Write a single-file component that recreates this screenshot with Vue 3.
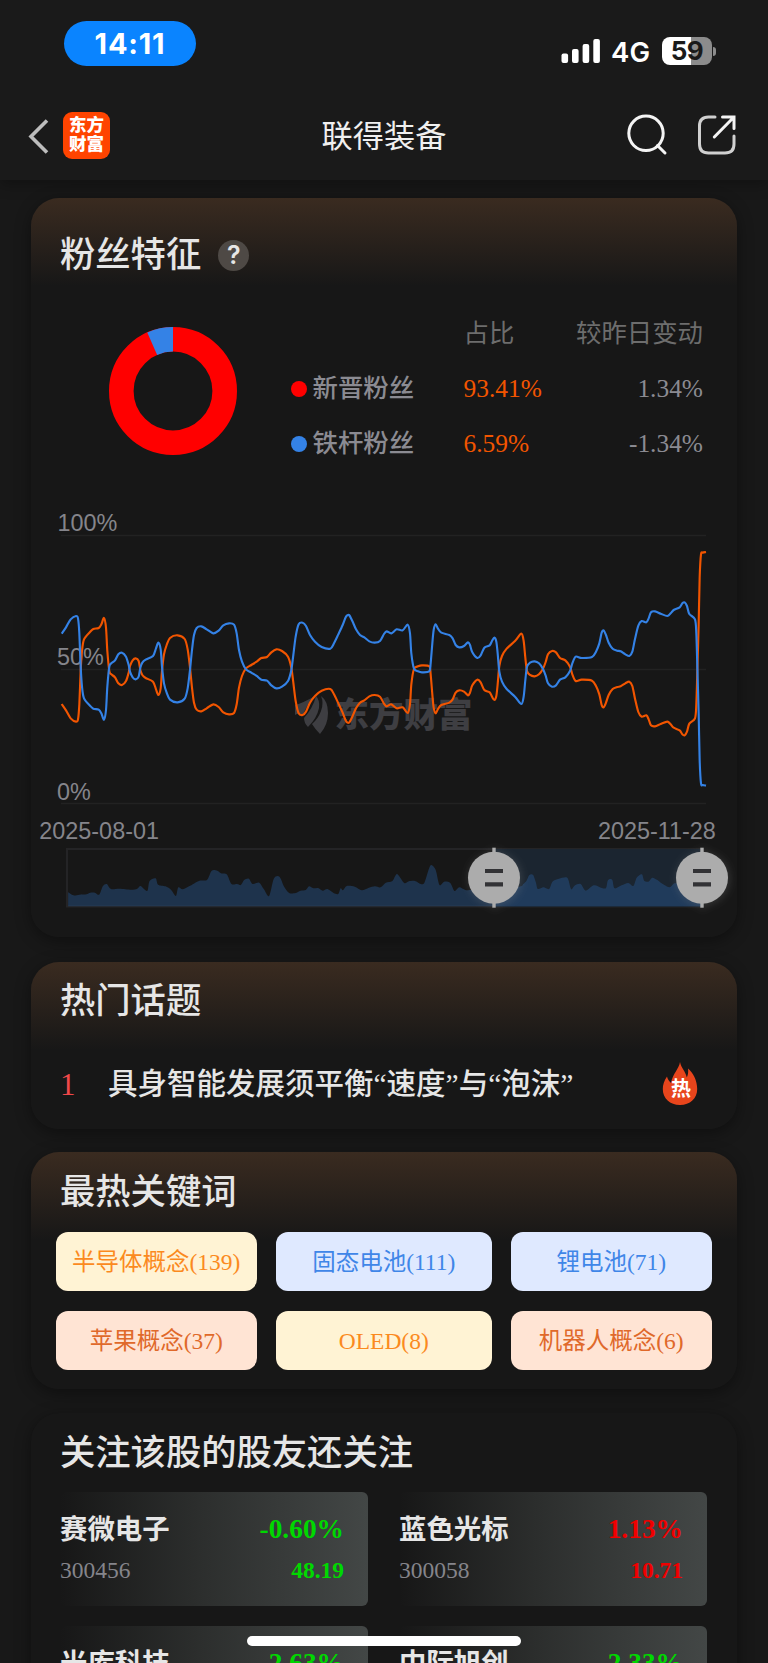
<template>

    <main class="app">

        <header class="top">
            <div class="status">
                <span class="time">14:11</span>
                <div class="signal">
                    <svg class="bars" width="40" height="26" viewBox="0 0 40 26">
                        <rect x="0.5" y="15.5" width="6.6" height="9.6" rx="2" />
                        <rect x="11" y="11" width="6.6" height="14.1" rx="2" />
                        <rect x="21.6" y="6" width="6.6" height="19.1" rx="2" />
                        <rect x="32.3" y="1" width="6.6" height="24.1" rx="2" />
                    </svg>
                    <span class="net">4G</span>
                    <span class="battery">59</span>
                    <i class="nub"></i>
                </div>
            </div>
            <nav class="nav">
                <svg class="back" width="24" height="40" viewBox="0 0 24 40">
                    <path d="M20 3.5 L4 19.5 L20 35.5" />
                </svg>
                <div class="logo"><span>东方</span><span>财富</span></div>
                <h1>联得装备</h1>
                <svg class="nav-icon search" width="44" height="44" viewBox="0 0 44 44">
                    <circle cx="20" cy="20.3" r="17.2" />
                    <path d="M31.5 32.5 L39 40" />
                </svg>
                <svg class="nav-icon" width="44" height="44" viewBox="0 0 44 44">
                    <path class="soft" d="M19 4 H12.5 Q3.5 4 3.5 13 V31 Q3.5 40 12.5 40 H29 Q38 40 38 31 V23" />
                    <path d="M26.5 4 H38 V15.5 M37.5 4.5 L18.3 24" />
                </svg>
            </nav>
        </header>

        <section class="card fans">
            <h2>粉丝特征 <span class="help">?</span></h2>
            <div class="ratio">
                <svg class="donut" width="130" height="130" viewBox="-65 -65 130 130">
                    <circle r="51.7" stroke="#ff0000" />
                    <circle r="51.7" stroke="#3482e6" pathLength="100" stroke-dasharray="6.59 93.41" stroke-dashoffset="-93.41" transform="rotate(-90)" />
                </svg>
                <div class="legend">
                    <span></span>
                    <span class="th">占比</span>
                    <span class="th right">较昨日变动</span>
                    <template v-for="fan in fans" :key="fan.name">
                        <span class="name"><i :class="fan.color"></i>{{ fan.name }}</span>
                        <span class="rate">{{ fan.rate }}</span>
                        <span class="right">{{ fan.change }}</span>
                    </template>
                </div>
            </div>

            <svg class="chart" width="706" height="430" viewBox="0 0 706 430">
                <defs>
                    <filter id="glow" x="-50%" y="-50%" width="200%" height="200%">
                        <feDropShadow dx="1" dy="1" stdDeviation="4" flood-color="#888" flood-opacity="0.3" />
                    </filter>
                </defs>
                <!-- 水印 -->
                <g class="watermark">
                    <path d="M264 205 Q272 203 284 196 Q276 204 272 215 Q268 212 264 215 Z" />
                    <path d="M285 196 Q282 208 273 218 Q273 223 277 227 Q286 218 288 208 Q289 200 285 196 Z" />
                    <path d="M290 196 Q293 203 290 211 Q287 219 281 224 Q284 229 289 234 Q297 225 297 213 Q297 201 290 196 Z" />
                    <text x="303.5" y="226.5">东方财富</text>
                </g>
                <path class="grid" d="M30 35.5 H675 M30 169.5 H675 M30 303.5 H675" />
                <text x="26.5" y="30.5">100%</text>
                <text x="26" y="164.8">50%</text>
                <text x="26" y="299.5">0%</text>
                <g transform="translate(-1 0) scale(0.33333)">
                    <path class="line orange" :d="orangeLine" />
                    <path class="line blue" :d="blueLine" />
                </g>
                <text x="8.3" y="338.8">2025-08-01</text>
                <text x="684.8" y="338.8" text-anchor="end">2025-11-28</text>

                <!-- 區間滑桿 -->
                <rect class="range-box" x="36" y="349" width="635" height="57.5" />
                <rect class="range-on" x="463" y="349" width="208" height="58" />
                <path class="area" transform="translate(-1 310) scale(0.47065 0.33333)" :d="areaPath" />
                <g v-for="x in [463, 671]" :key="x" :transform="`translate(${x} 377.7)`" filter="url(#glow)">
                    <rect class="knob" x="-1.7" y="-30" width="3.4" height="60" />
                    <circle class="knob" r="26" />
                    <path class="grip" d="M-9 -6.7 H9 M-9 6.6 H9" />
                </g>
            </svg>
        </section>

        <section class="card topics">
            <h2>热门话题</h2>
            <div class="topic">
                <span class="rank">1</span>
                <span class="topic-title">具身智能发展须平衡“速度”与“泡沫”</span>
                <svg class="hot" width="36" height="45" viewBox="0 0 36 45">
                    <path d="M18 1 C17 8 11 12 9 22 C7 20 5.5 18 5 15.5 C2 20 0.8 24 0.8 28 C0.8 37.5 8 44 18 44 C28 44 35.2 37.5 35.2 28 C35.2 19 31 12 26 7.5 C26.5 11 26 14 24.8 16.5 C23.5 10 19 7 18 1 Z" />
                    <text x="19" y="34.5">热</text>
                </svg>
            </div>
        </section>

        <section class="card keywords">
            <h2>最热关键词</h2>
            <div class="tags">
                <span v-for="tag in tags" :key="tag.text" class="tag" :class="tag.type">{{ tag.text }}</span>
            </div>
        </section>

        <section class="card plain stocks">
            <h2>关注该股的股友还关注</h2>
            <div class="stock-list">
                <div v-for="stock in stocks" :key="stock.name" class="stock" :class="{ up: stock.up }">
                    <div class="row">
                        <span class="stock-name">{{ stock.name }}</span>
                        <b>{{ stock.change }}</b>
                    </div>
                    <div v-if="stock.price" class="row small">
                        <span>{{ stock.code }}</span>
                        <b>{{ stock.price }}</b>
                    </div>
                </div>
            </div>
        </section>

        <div class="home-bar"></div>
    </main>

</template>

<script setup>
import { computed, ref } from "vue"

    const fans = ref([
        { name: '新晋粉丝', rate: '93.41%', change: '1.34%', color: 'red' },
        { name: '铁杆粉丝', rate: '6.59%', change: '-1.34%', color: 'blue' }
    ])

    const tags = ref([
        { text: '半导体概念(139)', type: 'yellow' },
        { text: '固态电池(111)', type: 'blue' },
        { text: '锂电池(71)', type: 'blue' },
        { text: '苹果概念(37)', type: 'pink' },
        { text: 'OLED(8)', type: 'yellow' },
        { text: '机器人概念(6)', type: 'pink' }
    ])

    const stocks = ref([
        { name: '赛微电子', code: '300456', change: '-0.60%', price: '48.19', up: false },
        { name: '蓝色光标', code: '300058', change: '1.13%', price: '10.71', up: true },
        { name: '光库科技', change: '-2.63%', up: false },
        { name: '中际旭创', change: '-2.33%', up: false }
    ])

    //鐵桿粉絲走勢 x,y
    const trend = `95,401 108,382 122,358 138,348 144,355 148,400 152,500 156,560 162,595 180,617 190,626 206,629 214,640
        222,659 228,630 232,560 238,500 244,490 255,481 265,463 276,458 288,470 296,495 300,515 308,532 317,538 326,530
        331,503 337,488 347,479 369,468 378,445 385,428 392,448 396,500 402,550 410,578 420,599 443,607 464,596 473,565
        480,510 486,450 492,405 500,384 514,379 530,388 550,400 566,392 580,376 597,370 612,374 620,400 627,450 636,485
        648,508 664,518 680,528 694,539 711,542 724,556 739,565 756,560 774,543 784,510 790,465 797,410 806,373 818,368
        828,378 840,405 855,425 875,441 901,446 912,430 925,403 938,375 948,350 957,345 967,363 978,388 990,405 1003,412
        1018,424 1034,428 1050,423 1062,402 1070,394 1084,400 1100,388 1118,391 1133,374 1140,400 1144,460 1152,506
        1164,514 1176,517 1198,514 1202,490 1207,430 1211,390 1217,373 1224,386 1234,398 1258,405 1268,415 1277,435
        1288,442 1302,438 1314,427 1320,435 1327,457 1342,474 1352,466 1363,443 1379,436 1386,423 1393,413 1399,425
        1403,460 1408,515 1416,545 1430,567 1455,590 1474,612 1481,590 1486,540 1491,500 1500,488 1514,484 1527,490
        1539,507 1547,527 1554,550 1566,560 1578,556 1590,539 1606,532 1620,513 1627,490 1637,470 1655,474 1686,471
        1698,455 1708,430 1715,398 1721,391 1728,405 1736,428 1748,446 1762,452 1772,454 1786,463 1798,468 1807,455
        1815,417 1825,377 1835,363 1849,367 1856,355 1863,337 1875,334 1892,341 1912,348 1922,340 1931,330 1949,322
        1957,310 1964,307 1971,318 1978,342 1995,358 1999,400 2002,500 2006,640 2009,780 2013,850 2018,855 2028,857`

    const volume = `81,247 92,256 105,254 120,253 128,248 138,248 147,254 155,228 163,222 172,237 190,236 215,239 228,236
        235,228 249,243 254,213 267,205 272,224 288,229 300,240 310,258 315,232 324,238 338,229 360,212 376,210 386,182
        398,182 406,190 418,193 428,222 440,222 448,225 455,210 465,206 473,222 487,218 497,238 508,258 518,206 530,200
        540,230 550,248 562,250 575,242 586,240 593,229 602,235 612,234 622,242 632,237 645,249 655,252 660,235 665,241
        673,228 690,230 705,241 720,233 733,229 745,232 756,218 770,213 780,192 795,219 805,214 818,213 830,222 838,218
        848,175 853,165 862,180 870,225 880,215 893,219 902,243 912,232 925,240 940,240 986,240 1040,230 1048,222
        1055,212 1061,195 1069,195 1075,218 1079,237 1091,232 1103,237 1110,215 1122,207 1139,202 1144,210 1150,238
        1158,226 1170,222 1181,242 1198,226 1215,234 1224,234 1228,211 1237,209 1242,235 1257,226 1271,219 1282,228
        1289,203 1300,193 1305,212 1314,215 1322,203 1333,210 1342,220 1358,232 1367,222 1374,220 1428,228`

    const parse = str => str.trim().split(/\s+/).map(p => p.split(',').map(Number))

    //平滑曲線，控制點取前後兩點的斜率
    const smooth = pts => {
        let d = `M${pts[0]}`
        for (let i = 0; i < pts.length - 1; i++) {
            const p0 = pts[i - 1] || pts[i]
            const p1 = pts[i]
            const p2 = pts[i + 1]
            const p3 = pts[i + 2] || p2
            d += `C${p1[0] + (p2[0] - p0[0]) / 7},${p1[1] + (p2[1] - p0[1]) / 7} ${p2[0] - (p3[0] - p1[0]) / 7},${p2[1] - (p3[1] - p1[1]) / 7} ${p2}`
        }
        return d
    }

    const blueLine = computed(() => smooth(parse(trend)))
    //新晉與鐵桿相加為 100%，上下對稱
    const orangeLine = computed(() => smooth(parse(trend).map(([x, y]) => [x, 1013 - y])))
    const areaPath = computed(() => smooth(parse(volume)) + 'L1428,289 L81,289 Z')

</script>

<style>
body {
    background-color: #181818;
}
</style>

<style scoped>

.app {
    position: relative;
    width: 768px;
    height: 1663px;
    overflow: hidden;
    background-color: #181818;
    color: #e6e6e6;
    font-family: "Liberation Serif", "Noto Sans CJK SC", sans-serif;
}

.top {
    height: 180px;
    background-color: #1a1a1a;
    box-shadow: 0 4px 14px rgba(0, 0, 0, 0.3);
}

.status {
    display: flex;
    justify-content: space-between;
    height: 87px;
    padding: 21px 52px 0 64px;
    box-sizing: border-box;
    font-family: Inter, sans-serif;
    font-weight: 600;
    color: white;
}

.time {
    width: 132px;
    height: 45px;
    line-height: 46px;
    border-radius: 23px;
    background-color: #0a84ff;
    text-align: center;
    font-size: 29px;
    font-weight: 700;
    letter-spacing: 0.8px;
}

.signal {
    display: flex;
    align-items: center;
    height: 60px;
}

.bars {
    fill: white;
}

.net {
    margin: 2px 12px 0 10px;
    font-size: 27.5px;
}

.battery {
    width: 50px;
    height: 28px;
    line-height: 28px;
    border-radius: 8px;
    background: linear-gradient(90deg, #fff 58%, #8c8c8c 58%);
    color: #1a1a1a;
    text-align: center;
    font-size: 26px;
    font-weight: 700;
    letter-spacing: -0.5px;
}

.nub {
    width: 3px;
    height: 9px;
    margin-left: 1px;
    border-radius: 0 4px 4px 0;
    background-color: #8c8c8c;
}

.nav {
    display: flex;
    align-items: center;
    height: 96px;
    padding: 0 28px 0 27px;
}

.back {
    fill: none;
    stroke: #bdbdbd;
    stroke-width: 3.6;
    margin-top: 3px;
}

.logo {
    display: flex;
    flex-direction: column;
    justify-content: center;
    width: 47px;
    height: 47px;
    margin-left: 12px;
    border-radius: 9px;
    background-color: #ff4400;
    color: white;
    font-size: 17.5px;
    line-height: 19.5px;
    font-weight: 900;
    text-align: center;
}

h1 {
    flex: 1;
    margin: 3px 0 0;
    padding-left: 32px;
    font-size: 31.2px;
    line-height: 44px;
    font-weight: 400;
    text-align: center;
    color: #f0f0f0;
}

.nav-icon {
    fill: none;
    stroke: #f4f4f4;
    stroke-width: 3;
    stroke-linecap: round;
}

.search {
    margin-right: 26px;
}

.soft {
    stroke: #d0d0d0;
}

.card {
    width: 706px;
    margin: 0 0 24px 31px;
    box-sizing: border-box;
    border-radius: 28px;
    background: linear-gradient(#3a2b20 0, #171717 88px, #171717);
    box-shadow: 0 4px 16px rgba(0, 0, 0, 0.4);
}

.plain {
    background: #171717;
}

h2 {
    display: flex;
    align-items: center;
    margin: 0;
    padding: 0 0 6px 29px;
    height: 72px;
    font-size: 35.3px;
    font-weight: 500;
}

.fans {
    height: 739px;
    margin-top: 18px;
    margin-bottom: 24.5px;
}

.fans h2 {
    height: 106px;
    padding-bottom: 3px;
}

.help {
    width: 31px;
    height: 31px;
    margin: 8px 0 0 17px;
    border-radius: 50%;
    background-color: #4e4945;
    font: 600 25px/31px Inter, sans-serif;
    text-align: center;
}

.ratio {
    display: flex;
    height: 193px;
    padding: 0 34px 0 77px;
}

.donut {
    margin-top: 19px;
    fill: none;
    stroke-width: 24.6;
}

.legend {
    flex: 1;
    display: grid;
    grid-template-columns: 173px 91px 1fr;
    grid-template-rows: 55px 55px 55px;
    align-items: center;
    margin: -2px 0 0 52.5px;
    height: 165px;
    font-size: 25.4px;
    line-height: 36px;
    color: #8b8b92;
}

.th {
    color: #6d6d6d;
}

.right {
    text-align: right;
}

.name {
    display: flex;
    align-items: center;
    font-weight: 500;
}

.name i {
    width: 16px;
    height: 16px;
    margin: 2px 6px 0 0;
    border-radius: 50%;
}

.name .red {
    background-color: #ff0000;
}

.name .blue {
    background-color: #3482e6;
}

.rate {
    color: #f25500;
}

.chart {
    display: block;
    overflow: visible;
}

.chart text {
    font-family: "Liberation Sans", sans-serif;
    font-size: 23.4px;
    fill: #85858b;
}

.chart .watermark text {
    font-family: "Noto Sans CJK SC", sans-serif;
    font-size: 34.5px;
    font-weight: 900;
    fill: #3e3e42;
}

.watermark {
    fill: #3e3e42;
}

.grid {
    stroke: #222;
    stroke-width: 1.4;
}

.line {
    fill: none;
    stroke-width: 6.4;
    stroke-linejoin: round;
}

.orange {
    stroke: #f25500;
}

.line.blue {
    stroke: #3482e6;
}

.range-box {
    fill: none;
    stroke: #242426;
    stroke-width: 2;
}

.range-on {
    fill: #1b2530;
}

.area {
    fill: #2a61a4;
    fill-opacity: 0.38;
}

.knob {
    fill: #acacac;
}

.grip {
    stroke: #333336;
    stroke-width: 4.2;
}

.topics {
    height: 167px;
    margin-bottom: 23.5px;
}

.topic {
    display: flex;
    align-items: center;
    height: 84px;
    padding: 2px 39px 0 29px;
}

.rank {
    width: 48px;
    font-size: 31px;
    color: #f0484a;
    margin-top: 2px;
}

.topic-title {
    flex: 1;
    font-size: 29.5px;
    font-weight: 500;
    margin-top: -5px;
}

.hot {
    fill: #e8451c;
}

.hot text {
    font: 700 20px "Noto Sans CJK SC", sans-serif;
    fill: white;
    text-anchor: middle;
}

.keywords {
    height: 237px;
}

.tags {
    display: grid;
    grid-template-columns: 200.5px 215.5px 200.5px;
    grid-auto-rows: 59px;
    gap: 19.5px;
    padding: 2px 0 0 25px;
}

.tag {
    border-radius: 12px;
    font-size: 23.5px;
    line-height: 61px;
    text-align: center;
}

.tag.yellow {
    background-color: #fff3d4;
    color: #fb8a1e;
}

.tag.blue {
    background-color: #dfe9ff;
    color: #3f86e8;
}

.tag.pink {
    background-color: #ffe4d4;
    color: #e0692a;
}

.stock-list {
    display: grid;
    grid-template-columns: 308px 308px;
    grid-auto-rows: 114px;
    gap: 20px 31px;
    padding: 1px 0 0 29px;
}

.stock {
    padding: 13px 24px 0 0;
    box-sizing: border-box;
    border-radius: 6px;
    background: linear-gradient(90deg, #171717, #2c2e2d 45%, #434746);
}

.row {
    display: flex;
    justify-content: space-between;
    align-items: center;
    height: 44px;
    font-size: 27.4px;
}

.row b {
    margin-top: 4px;
    color: #00d800;
}

.up b {
    color: #f00000;
}

.stock-name {
    font-weight: 700;
}

.small {
    height: 43px;
    font-size: 23.5px;
    color: #85858b;
}

.small b {
    margin-top: 0;
}

.up .small b,
.up .row b {
    color: #f00000;
}

.home-bar {
    position: absolute;
    left: 247px;
    top: 1636px;
    width: 274px;
    height: 10px;
    border-radius: 5px;
    background-color: white;
}

</style>
